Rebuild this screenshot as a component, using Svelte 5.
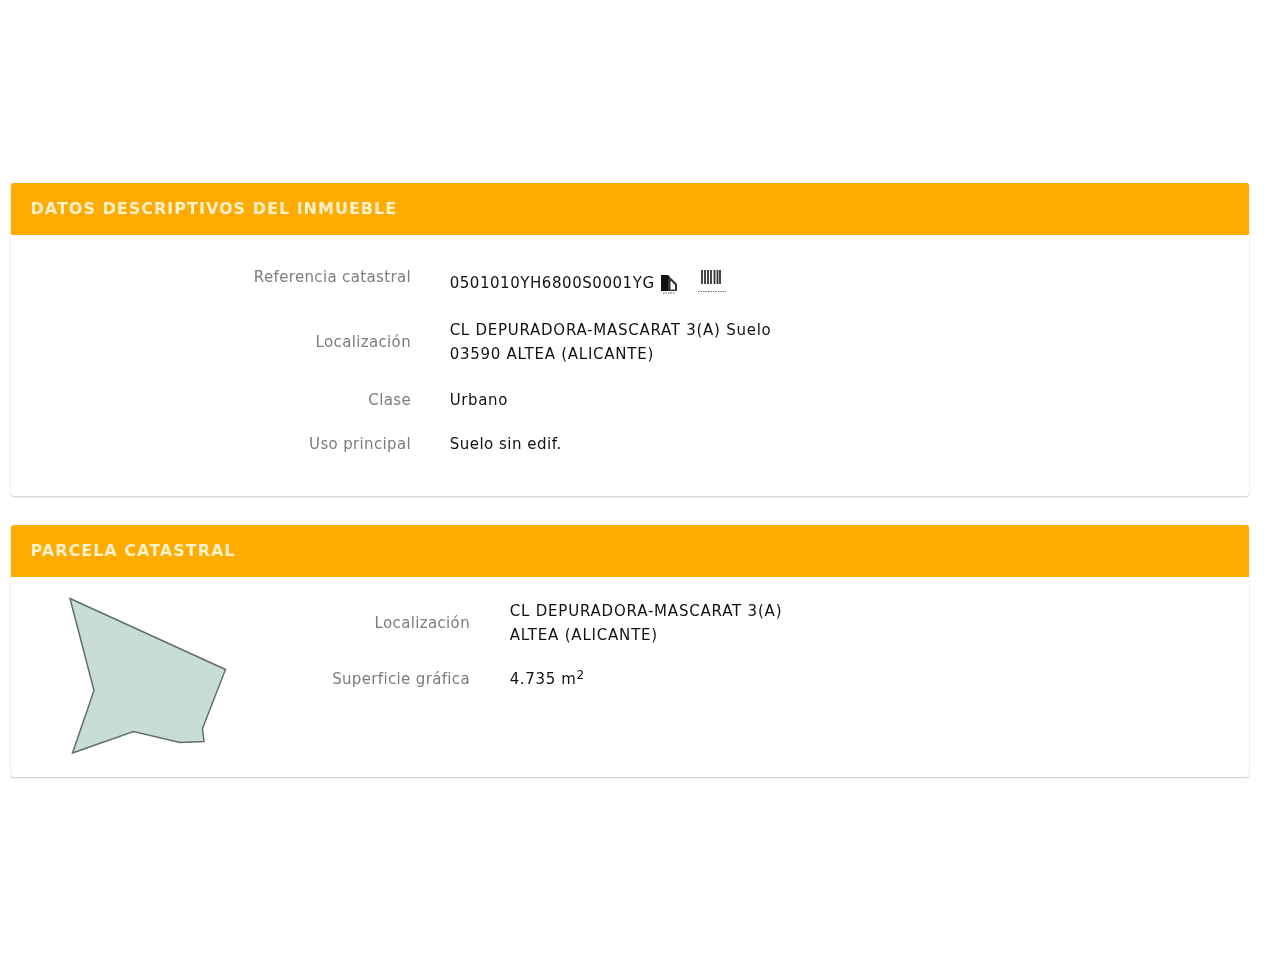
<script>
  const general = [
    { label: 'Referencia catastral', lines: ['0501010YH6800S0001YG'], icons: true, cls: 'r1' },
    { label: 'Localización', lines: ['CL DEPURADORA-MASCARAT 3(A) Suelo', '03590 ALTEA (ALICANTE)'], cls: 'r2' },
    { label: 'Clase', lines: ['Urbano'], cls: 'r3' },
    { label: 'Uso principal', lines: ['Suelo sin edif.'], cls: 'r4' }
  ];
</script>

<main class="page">
  <section class="panel first">
    <h2>DATOS DESCRIPTIVOS DEL INMUEBLE</h2>
    <div class="rows general">
      {#each general as row}
        <div class="row {row.cls}">
          <div class="label">{row.label}</div>
          <div class="value">
            {#each row.lines as line}<div class="line">{line}{#if row.icons}<svg class="copy" width="18" height="20" viewBox="0 0 18 20"><path d="M1 1h7l2 2v14H1z" fill="#111"/><path d="M8 4h3l6 6v7H8z" fill="#333"/><path d="M10.500 7h.5l4 4v4.500h-4.500z" fill="#fff"/><path d="M3 19h12" stroke="#555" stroke-dasharray="1.500 1" fill="none"/></svg><svg class="barcode" width="30" height="25" viewBox="0 0 30 25"><path d="M6 2v14M9 2v14M12 2v14M15 2v14M18.500 2v14M21.500 2v14M24 2v14" stroke="#333" stroke-width="1.800" fill="none"/><path d="M2 23.500h28" stroke="#666" stroke-dasharray="1.500 1" fill="none"/></svg>{/if}</div>{/each}
          </div>
        </div>
      {/each}
    </div>
  </section>

  <section class="panel second">
    <h2>PARCELA CATASTRAL</h2>
    <div class="parcel">
      <svg class="shape" width="170" height="170" viewBox="60 590 170 170">
        <polygon points="70,598.500 225.500,669.500 202.500,728.500 204,741.500 180,742.500 133.500,731.500 72.500,753 94,690.500" fill="#c7ddd6" stroke="#5f6f6a" stroke-width="1.500"/>
      </svg>
      <div class="rows info">
        <div class="row p1">
          <div class="label">Localización</div>
          <div class="value"><div class="line">CL DEPURADORA-MASCARAT 3(A)</div><div class="line">ALTEA (ALICANTE)</div></div>
        </div>
        <div class="row p2">
          <div class="label">Superficie gráfica</div>
          <div class="value"><div class="area">4.735 m<sup>2</sup></div></div>
        </div>
      </div>
    </div>
  </section>
</main>

<style>
  :global(body) {
    margin: 0;
    background: #fff;
  }
  .page {
    padding: 183px 31px 40px 11px;
    font-family: "DejaVu Sans", Verdana, sans-serif;
    font-size: 15px;
    color: #111;
    filter: blur(0.35px);
  }
  .panel {
    box-sizing: border-box;
    width: 1238px;
    background: #fff;
    border-radius: 3px;
    box-shadow: 0 1px 2px rgba(0, 0, 0, 0.2), 0 0 1px rgba(0, 0, 0, 0.14);
    overflow: hidden;
  }
  .first { height: 313px; margin-bottom: 29px; }
  .second { height: 252px; }
  h2 {
    margin: 0;
    height: 52px;
    padding-left: 19.500px;
    background: #ffab00;
    color: #fff2cc;
    font-size: 16px;
    letter-spacing: 1px;
    font-weight: 700;
    line-height: 51px;
    white-space: nowrap;
  }
  .rows { display: flex; flex-direction: column; }
  .row { display: flex; align-items: center; }
  .label { color: #7c7c7c; text-align: right; flex: none; letter-spacing: 0.35px; margin-right: -0.35px; }
  .value { letter-spacing: 0.65px; white-space: nowrap; }
  .general { padding-top: 28px; }
  .general .label { width: 400px; }
  .general .value { margin-left: 39px; }
  .line { line-height: 24px; display: flex; align-items: flex-start; }
  .area { line-height: 24px; }
  .r1 { height: 30px; margin-bottom: 25px; }
  .r1 .label { align-self: flex-start; line-height: 28px; }
  .r1 .line { padding-top: 8px; }
  .r1 .value { align-self: flex-start; letter-spacing: 0.55px; }
  .copy { margin: 3px 0 0 5px; flex: none; }
  .barcode { margin: -3px 0 0 18px; flex: none; }
  .r2 { height: 48px; margin-bottom: 22px; }
  .r2 .value { letter-spacing: 0.74px; }
  .r3 { height: 24px; margin-bottom: 20px; }
  .r4 { height: 24px; }
  .r4 .value { letter-spacing: 0.5px; }
  .parcel { display: flex; align-items: flex-start; padding-top: 13px; padding-left: 49px; }
  .shape { flex: none; display: block; }
  .info { padding-top: 9px; }
  .info .label { width: 240px; }
  .info .value { margin-left: 40px; }
  .p1 { height: 48px; margin-bottom: 20px; }
  .p1 .value { letter-spacing: 0.8px; }
  .p2 { height: 24px; }
  sup { font-size: 12px; line-height: 0; vertical-align: baseline; position: relative; top: -5px; margin-left: 0; }
</style>
